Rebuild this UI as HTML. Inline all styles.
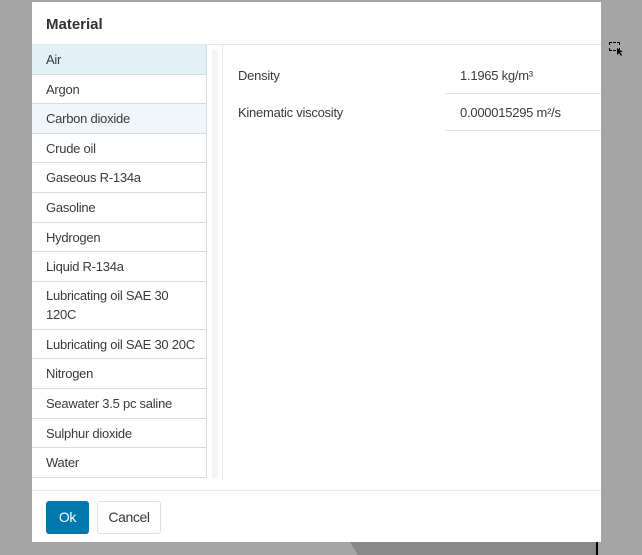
<!DOCTYPE html>
<html><head><meta charset="utf-8"><style>
*{box-sizing:border-box;margin:0;padding:0}
body{width:642px;height:555px;background:#a5a5a5;position:relative;overflow:hidden;font-family:"Liberation Sans",sans-serif;color:#3a3a3a}
.dlg{position:absolute;left:32px;top:2px;width:569px;height:540px;background:#fff}
.hdr{height:43px;border-bottom:1px solid #e6e6e6;padding:14px 14px;font-weight:bold;font-size:15px;color:#333}
.list{position:absolute;left:0;top:43px;width:175px;border-right:1px solid #d5dce3}
.it{height:29.6px;border-bottom:1px solid #d5dce3;padding:7px 14px 0;font-size:13px;line-height:15px;letter-spacing:-0.25px;white-space:nowrap}
.it.tall{height:48px;white-space:normal;line-height:19px;padding-top:4px}
.sel{background:#e2f0f8}.hov{background:#f0f6fa}
.track{position:absolute;left:180px;top:47px;width:6px;height:430px;background:#f3f5f7;border-radius:3px}
.div{position:absolute;left:190px;top:43px;width:1px;height:436px;background:#e8e8e8}
.lbl{position:absolute;left:206px;font-size:13px;letter-spacing:-0.25px}
.val{position:absolute;left:413px;width:156px;font-size:13px;letter-spacing:-0.25px;padding-left:15px;border-bottom:1px solid #e2e2e2}
.ftr{position:absolute;left:0;top:488px;width:569px;border-top:1px solid #e6e6e6;height:52px}
.ok{position:absolute;left:14px;top:10px;width:43px;height:33px;background:#0077ad;color:#fff;border-radius:3px;font-size:14px;text-align:center;line-height:32px;letter-spacing:-0.3px}
.cn{position:absolute;left:65px;top:10px;width:64px;height:33px;border:1px solid #e0e0e0;border-radius:3px;font-size:14px;text-align:center;line-height:30px;letter-spacing:-0.4px}
</style></head><body>
<div style="position:absolute;left:350px;top:542px;width:247px;height:13px;background:#888;clip-path:polygon(0 0,100% 0,100% 100%,8px 100%)"></div>
<div style="position:absolute;left:596px;top:542px;width:2px;height:13px;background:#000"></div>
<div style="position:absolute;left:609px;top:42px;width:11px;height:9px;border:1px dashed #000"></div>
<svg style="position:absolute;left:617px;top:48px" width="7" height="9"><path d="M0 0L0 7L2 5L4 8L5 7L3 4L6 4Z" fill="#000"/></svg>
<div class="dlg">
<div class="hdr">Material</div>
<div class="list">
<div class="it sel">Air</div><div class="it">Argon</div><div class="it hov">Carbon dioxide</div><div class="it">Crude oil</div><div class="it">Gaseous R-134a</div><div class="it">Gasoline</div><div class="it">Hydrogen</div><div class="it">Liquid R-134a</div><div class="it tall">Lubricating oil SAE 30 120C</div><div class="it">Lubricating oil SAE 30 20C</div><div class="it">Nitrogen</div><div class="it">Seawater 3.5 pc saline</div><div class="it">Sulphur dioxide</div><div class="it">Water</div>
</div>
<div class="track"></div><div class="div"></div>
<div class="lbl" style="top:66px">Density</div>
<div class="lbl" style="top:103px">Kinematic viscosity</div>
<div class="val" style="top:44px;padding-top:22px;height:48px">1.1965 kg/m³</div>
<div class="val" style="top:92px;padding-top:11px;height:37px">0.000015295 m²/s</div>
<div class="ftr"><div class="ok">Ok</div><div class="cn">Cancel</div></div>
</div>
</body></html>
